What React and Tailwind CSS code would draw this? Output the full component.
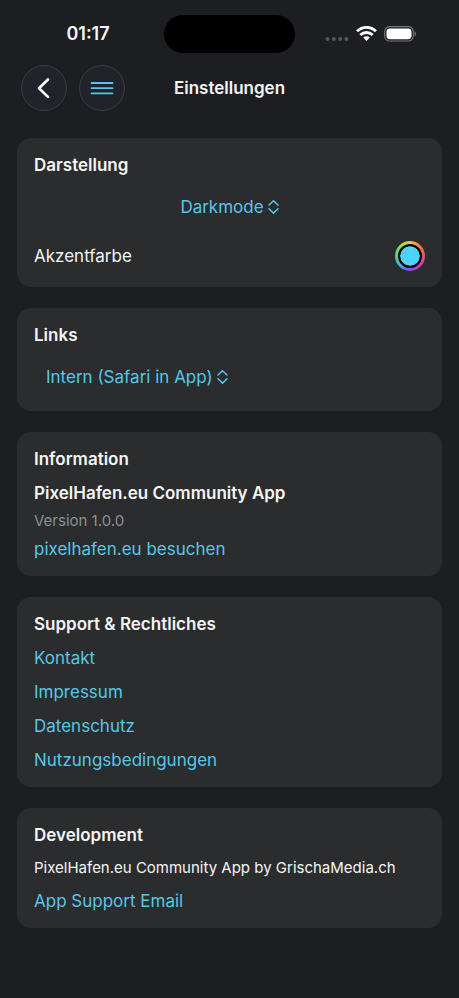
import React, { useState } from 'react';

const Chevrons = () => (
  <svg className="pointer-events-none h-4 w-[11px] shrink-0" viewBox="0 0 11 16" fill="none" stroke="currentColor" strokeWidth="1.5" strokeLinecap="round" strokeLinejoin="round" aria-hidden="true">
    <path d="M1 6 5.5 1.7 10 6M1 9.8l4.5 4.3L10 9.8" />
  </svg>
);

const Picker = ({ id, label, value, onChange, options }) => (
  <div className="flex h-[37px] items-center gap-1 px-3 text-[#55c8e8]">
    <label htmlFor={id} className="sr-only">{label}</label>
    <select
      id={id}
      value={value}
      onChange={(e) => onChange(e.target.value)}
      className="h-full appearance-none bg-transparent leading-7 outline-none [field-sizing:content]"
    >
      {options.map((option) => (
        <option key={option} className="bg-[#2a2c2d]">{option}</option>
      ))}
    </select>
    <Chevrons />
  </div>
);

const Card = ({ title, children }) => (
  <section className="flex flex-col items-start gap-3 rounded-[14px] bg-[#2a2c2d] px-[17px] py-4">
    <h2 className="font-semibold">{title}</h2>
    {children}
  </section>
);

const TextLink = ({ href, children }) => (
  <a href={href} className="text-[#55c8e8]">{children}</a>
);

const StatusBar = () => (
  <div className="grid h-[38px] grid-cols-[1fr_131px_1fr] items-center">
    <span className="pl-3 text-center text-lg font-semibold">01:17</span>
    <div className="h-full rounded-full bg-black" />
    <div className="flex items-center justify-end pr-[42px]">
      <svg className="h-5 w-[92px]" viewBox="0 0 92 20" fill="none" aria-hidden="true">
        <g fill="#55565a">
          <circle cx="2.5" cy="15" r="2" />
          <circle cx="8.8" cy="15" r="2" />
          <circle cx="15.1" cy="15" r="2" />
          <circle cx="21.4" cy="15" r="2" />
        </g>
        <g stroke="#fff" strokeWidth="2.9">
          <path d="M32.1 7.3a13.2 13.2 0 0 1 18.8 0" />
          <path d="M35.4 11a8.6 8.6 0 0 1 12.2 0" />
        </g>
        <path d="M38.2 13.6a4.7 4.7 0 0 1 6.6 0L41.5 17z" fill="#fff" />
        <rect x="59.7" y="2.6" width="28.6" height="14.4" rx="4.8" stroke="#77787b" strokeWidth="1.1" />
        <rect x="61.5" y="4.4" width="25" height="10.8" rx="3.4" fill="#fff" />
        <path d="M89.7 7.4c1.8.6 1.8 4.2 0 4.8z" fill="#77787b" />
      </svg>
    </div>
  </div>
);

const RoundButton = ({ label, children }) => (
  <button
    type="button"
    aria-label={label}
    className="flex size-[46px] items-center justify-center rounded-full border border-[#3c3e42] bg-[#20242a]"
  >
    {children}
  </button>
);

const legalLinks = [
  { label: 'Kontakt', href: '#kontakt' },
  { label: 'Impressum', href: '#impressum' },
  { label: 'Datenschutz', href: '#datenschutz' },
  { label: 'Nutzungsbedingungen', href: '#nutzungsbedingungen' },
];

const App = () => {
  const [mode, setMode] = useState('Darkmode');
  const [linkTarget, setLinkTarget] = useState('Intern (Safari in App)');
  const [accent, setAccent] = useState('#4dd2ff');

  return (
    <div className="min-h-screen bg-[#1d1e22] pt-[15px] pb-8 font-['Inter',sans-serif] text-[17px] leading-[22px] text-[#f5f5f5]">
      <StatusBar />

      <header className="mt-3 grid grid-cols-[1fr_auto_1fr] items-center px-[21px]">
        <div className="flex gap-3">
          <RoundButton label="Zurück">
            <svg className="h-6 w-4" viewBox="0 0 16 24" fill="none" stroke="#fff" strokeWidth="2.6" strokeLinecap="round" strokeLinejoin="round" aria-hidden="true">
              <path d="M12 3.5 3 12.2l9 8.7" />
            </svg>
          </RoundButton>
          <RoundButton label="Menü">
            <svg className="h-4 w-6" viewBox="0 0 24 16" stroke="#55c8e8" strokeWidth="1.8" strokeLinecap="round" aria-hidden="true">
              <path d="M1.5 3h21M1.5 8.2h21M1.5 13.4h21" />
            </svg>
          </RoundButton>
        </div>
        <h1 className="font-semibold">Einstellungen</h1>
      </header>

      <main className="mt-[27px] flex flex-col gap-[21px] px-[17px]">
        <Card title="Darstellung">
          <div className="self-center">
            <Picker
              id="mode"
              label="Darstellung"
              value={mode}
              onChange={setMode}
              options={['Darkmode', 'Lightmode', 'System']}
            />
          </div>
          <div className="flex h-[34px] w-full items-center justify-between pt-1">
            <label htmlFor="accent">Akzentfarbe</label>
            <span className="flex size-[30px] items-center justify-center rounded-full bg-[conic-gradient(#eac34f,#f0703f_60deg,#dc4580_110deg,#a23fe0_160deg,#6a63ec_195deg,#43b5d8_230deg,#4fdc7c_280deg,#a5e04f_330deg,#eac34f)]">
              <input
                id="accent"
                type="color"
                value={accent}
                onChange={(e) => setAccent(e.target.value)}
                className="size-6 appearance-none overflow-hidden rounded-full border-2 border-black bg-black p-0 [&::-webkit-color-swatch]:rounded-full [&::-webkit-color-swatch]:border-0 [&::-webkit-color-swatch-wrapper]:p-0"
              />
            </span>
          </div>
        </Card>

        <Card title="Links">
          <Picker
            id="links"
            label="Links öffnen"
            value={linkTarget}
            onChange={setLinkTarget}
            options={['Intern (Safari in App)', 'Extern (Browser)']}
          />
        </Card>

        <Card title="Information">
          <div className="flex flex-col items-start gap-[7px]">
            <p className="font-semibold">PixelHafen.eu Community App</p>
            <p className="text-[15px] leading-5 text-[#8e8f91]">Version 1.0.0</p>
            <TextLink href="https://pixelhafen.eu">pixelhafen.eu besuchen</TextLink>
          </div>
        </Card>

        <Card title="Support & Rechtliches">
          {legalLinks.map((link) => (
            <TextLink key={link.label} href={link.href}>{link.label}</TextLink>
          ))}
        </Card>

        <Card title="Development">
          <p className="text-[15px] leading-5">PixelHafen.eu Community App by GrischaMedia.ch</p>
          <TextLink href="#support">App Support Email</TextLink>
        </Card>
      </main>
    </div>
  );
};

export default App;
